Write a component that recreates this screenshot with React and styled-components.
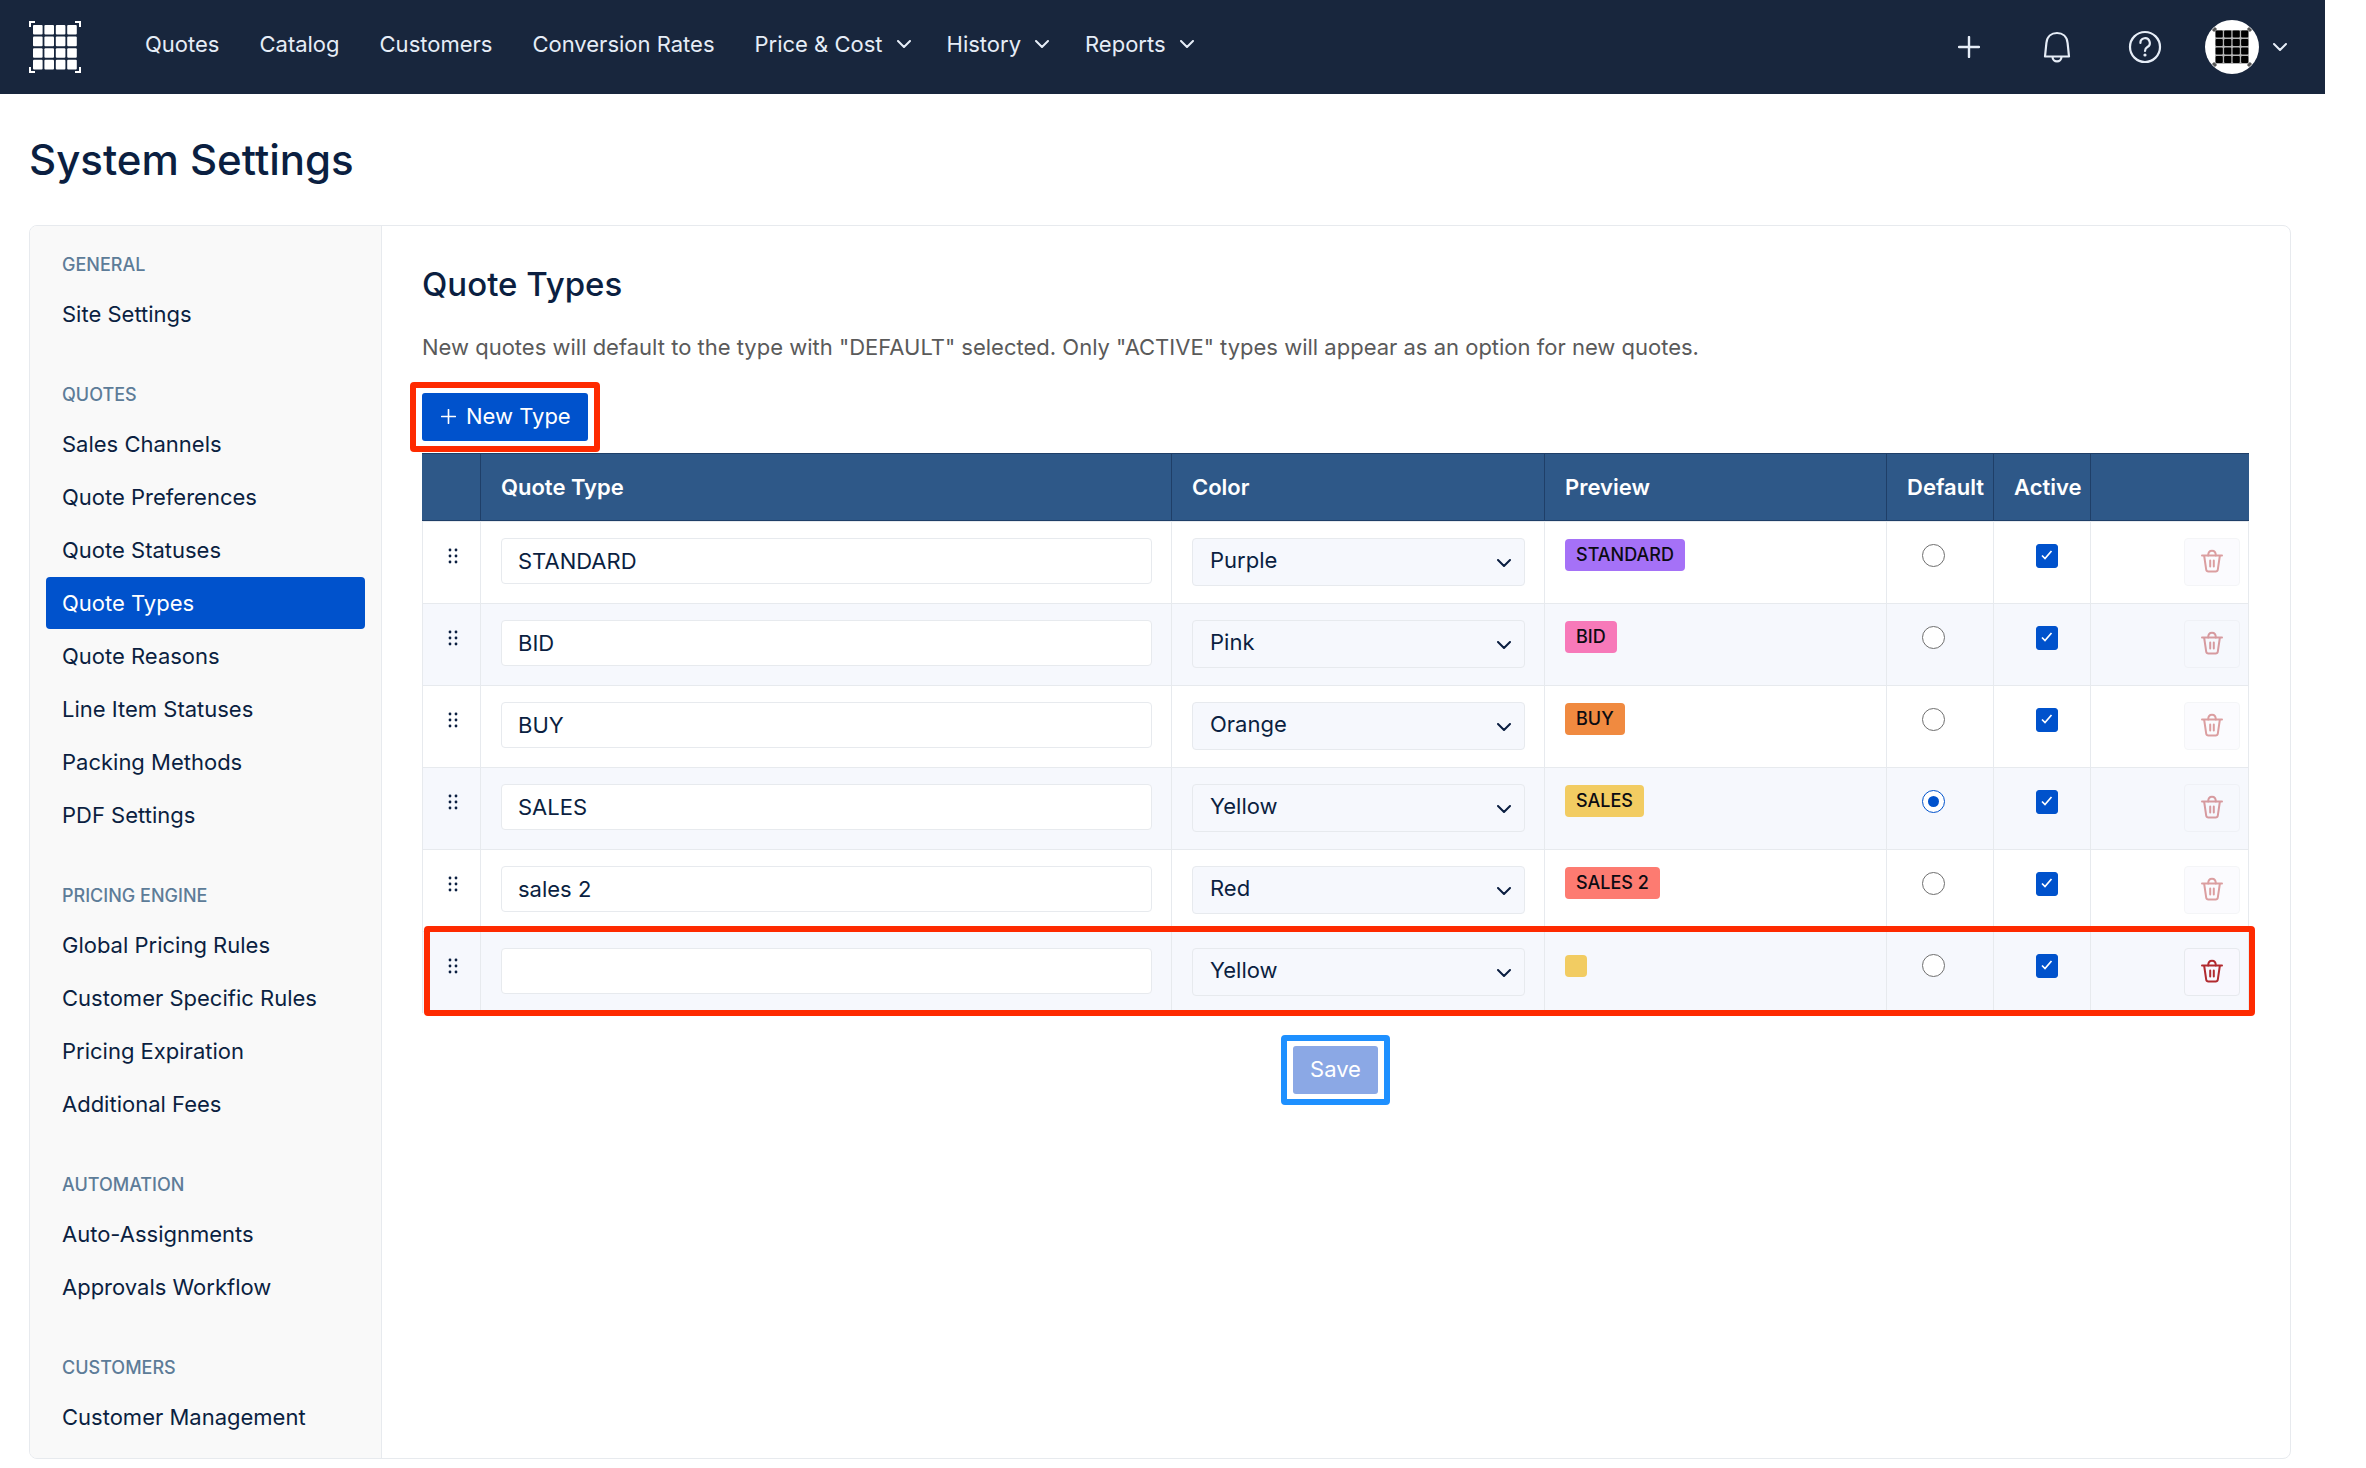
import React, { useState } from 'react';
import styled, { createGlobalStyle } from 'styled-components';

const menu = [
	{ label: 'Quotes' },
	{ label: 'Catalog' },
	{ label: 'Customers' },
	{ label: 'Conversion Rates' },
	{ label: 'Price & Cost', dropdown: true },
	{ label: 'History', dropdown: true },
	{ label: 'Reports', dropdown: true },
];

const sections = [
	{ title: 'GENERAL', items: ['Site Settings'] },
	{
		title: 'QUOTES',
		items: [
			'Sales Channels',
			'Quote Preferences',
			'Quote Statuses',
			'Quote Types',
			'Quote Reasons',
			'Line Item Statuses',
			'Packing Methods',
			'PDF Settings',
		],
	},
	{
		title: 'PRICING ENGINE',
		items: [
			'Global Pricing Rules',
			'Customer Specific Rules',
			'Pricing Expiration',
			'Additional Fees',
		],
	},
	{ title: 'AUTOMATION', items: ['Auto-Assignments', 'Approvals Workflow'] },
	{ title: 'CUSTOMERS', items: ['Customer Management'] },
];

const colors = {
	Purple: '#a571f7',
	Pink: '#f779b9',
	Orange: '#f08a40',
	Yellow: '#f2cc62',
	Red: '#fd7b71',
};

const initialTypes = [
	{ id: 1, name: 'STANDARD', color: 'Purple', active: true },
	{ id: 2, name: 'BID', color: 'Pink', active: true },
	{ id: 3, name: 'BUY', color: 'Orange', active: true },
	{ id: 4, name: 'SALES', color: 'Yellow', active: true },
	{ id: 5, name: 'sales 2', color: 'Red', active: true },
	{ id: 6, name: '', color: 'Yellow', active: true, isNew: true },
];

function Chevron() {
	return (
		<svg width="14" height="8" viewBox="0 0 14 8" fill="none" stroke="currentColor" strokeWidth="2" strokeLinecap="round" strokeLinejoin="round" aria-hidden="true">
			<path d="M1 1l6 6 6-6" />
		</svg>
	);
}

function GridMark() {
	const cells = [0, 1, 2, 3];
	return (
		<svg width="52" height="52" viewBox="0 0 52 52" fill="currentColor" aria-hidden="true">
			{cells.map((row) =>
				cells.map((col) => (
					<rect key={`${row}-${col}`} x={4 + col * 11.4} y={4 + row * 11.6} width="9.6" height="9.6" rx="1" />
				))
			)}
			<path d="M0 0h6v2H2v4H0zM52 0h-6v2h4v4h2zM0 52h6v-2H2v-4H0zM52 52h-6v-2h4v-4h2z" />
		</svg>
	);
}

function AvatarMark() {
	const cells = [0, 1, 2, 3];
	return (
		<svg width="54" height="54" viewBox="0 0 54 54" aria-hidden="true">
			<circle cx="27" cy="27" r="27" fill="#fff" />
			<rect x="10" y="10" width="34" height="34" fill="#b5b5b5" />
			{cells.map((row) =>
				cells.map((col) => (
					<rect key={`${row}-${col}`} x={10.6 + col * 8.5} y={10.4 + row * 8.5} width="7.2" height="7.2" rx="1" fill="#000" />
				))
			)}
			<path d="M8 11l3-3M43 8l3 3M8 43l3 3M46 43l-3 3" stroke="#555" strokeWidth="3" />
		</svg>
	);
}

function PlusIcon({ size }) {
	return (
		<svg width={size} height={size} viewBox="0 0 22 22" fill="none" stroke="currentColor" strokeWidth="2.400" strokeLinecap="round" aria-hidden="true">
			<path d="M11 1v20M1 11h20" />
		</svg>
	);
}

function BellIcon() {
	return (
		<svg width="28" height="32" viewBox="0 0 28 32" fill="none" stroke="currentColor" strokeWidth="2.200" strokeLinejoin="round" aria-hidden="true">
			<path d="M14 2C8.500 2 4 5.500 3.400 12L2 25.500h24L24.600 12C24 5.500 19.500 2 14 2z" />
			<path d="M9.500 25.500c0 6.600 9 6.600 9 0" />
		</svg>
	);
}

function HelpIcon() {
	return (
		<svg width="34" height="34" viewBox="0 0 34 34" fill="none" stroke="currentColor" strokeWidth="2.200" strokeLinecap="round" strokeLinejoin="round" aria-hidden="true">
			<circle cx="17" cy="17" r="15" />
			<path d="M12.400 13a4.700 4.700 0 1 1 7 4c-1.700 1-2.400 1.800-2.400 4" />
			<circle cx="17" cy="25" r="1.600" fill="currentColor" stroke="none" />
		</svg>
	);
}

function TrashIcon() {
	return (
		<svg width="24" height="24" viewBox="0 0 24 24" fill="none" stroke="currentColor" strokeWidth="2" strokeLinecap="round" strokeLinejoin="round" aria-hidden="true">
			<path d="M2 6.500h20" />
			<path d="M8.200 6.500C8.200 .3 15.800 .3 15.800 6.500" />
			<path d="M4.200 7l2 13.700q.3 1.800 2.200 1.800h7.200q1.900 0 2.200-1.800L19.800 7" />
			<path d="M10.200 11.500v6M13.800 11.500v6" />
		</svg>
	);
}

function GripIcon() {
	return (
		<svg width="10" height="16" viewBox="0 0 10 16" fill="currentColor" aria-hidden="true">
			{[2, 8, 14].map((y) => (
				<React.Fragment key={y}>
					<circle cx="2" cy={y} r="1.400" />
					<circle cx="8" cy={y} r="1.400" />
				</React.Fragment>
			))}
		</svg>
	);
}

export default function App() {
	const [types, setTypes] = useState(initialTypes);
	const [defaultId, setDefaultId] = useState(4);

	const update = (id, patch) => {
		setTypes(types.map((type) => (type.id === id ? { ...type, ...patch } : type)));
	};

	const addType = () => {
		setTypes([...types, { id: Date.now(), name: '', color: 'Yellow', active: true, isNew: true }]);
	};

	const removeType = (id) => {
		setTypes(types.filter((type) => type.id !== id));
	};

	return (
		<Page>
			<GlobalStyle />
			<Header>
				<Logo href="#" aria-label="Home">
					<GridMark />
				</Logo>
				<Nav>
					{menu.map((item) =>
						item.dropdown ? (
							<NavMenu key={item.label} type="button">
								{item.label}
								<Chevron />
							</NavMenu>
						) : (
							<NavLink key={item.label} href="#">
								{item.label}
							</NavLink>
						)
					)}
				</Nav>
				<Tools>
					<IconButton type="button" aria-label="Add">
						<PlusIcon size={22} />
					</IconButton>
					<IconButton type="button" aria-label="Notifications">
						<BellIcon />
					</IconButton>
					<IconButton type="button" aria-label="Help">
						<HelpIcon />
					</IconButton>
					<Account type="button" aria-label="Account">
						<AvatarMark />
						<Chevron />
					</Account>
				</Tools>
			</Header>

			<Title>System Settings</Title>

			<Panel>
				<Sidebar>
					{sections.map((section) => (
						<Section key={section.title}>
							<SectionTitle>{section.title}</SectionTitle>
							{section.items.map((item) => (
								<SideLink key={item} href="#" $active={item === 'Quote Types'}>
									{item}
								</SideLink>
							))}
						</Section>
					))}
				</Sidebar>

				<Content>
					<Heading>Quote Types</Heading>
					<Description>
						New quotes will default to the type with "DEFAULT" selected. Only "ACTIVE" types will appear as an option for new quotes.
					</Description>

					<Callout>
						<PrimaryButton type="button" onClick={addType}>
							<PlusIcon size={15} />
							New Type
						</PrimaryButton>
						<Frame $color="#fe2a00" />
					</Callout>

					<TableArea>
						<Table>
							<colgroup>
								<Col $width={59} />
								<col />
								<Col $width={373} />
								<Col $width={342} />
								<Col $width={107} />
								<Col $width={97} />
								<Col $width={158} />
							</colgroup>
							<thead>
								<tr>
									<Th aria-label="Order" />
									<Th>Quote Type</Th>
									<Th>Color</Th>
									<Th>Preview</Th>
									<Th>Default</Th>
									<Th>Active</Th>
									<Th aria-label="Delete" />
								</tr>
							</thead>
							<tbody>
								{types.map((type) => (
									<Row key={type.id}>
										<GripCell>
											<GripIcon />
										</GripCell>
										<Td>
											<TextInput
												aria-label="Quote type name"
												value={type.name}
												onChange={(e) => update(type.id, { name: e.target.value })}
											/>
										</Td>
										<Td>
											<SelectBox>
												<Select
													aria-label="Color"
													value={type.color}
													onChange={(e) => update(type.id, { color: e.target.value })}
												>
													{Object.keys(colors).map((name) => (
														<option key={name}>{name}</option>
													))}
												</Select>
												<Chevron />
											</SelectBox>
										</Td>
										<Td>
											<Tag $color={colors[type.color]}>{type.name}</Tag>
										</Td>
										<DefaultCell>
											<Radio
												type="radio"
												name="default"
												aria-label="Default"
												checked={defaultId === type.id}
												onChange={() => setDefaultId(type.id)}
											/>
										</DefaultCell>
										<ActiveCell>
											<CheckWrap>
												<Checkbox
													type="checkbox"
													aria-label="Active"
													checked={type.active}
													onChange={(e) => update(type.id, { active: e.target.checked })}
												/>
												<svg width="12" height="10" viewBox="0 0 12 10" fill="none" stroke="#fff" strokeWidth="1.700" aria-hidden="true">
													<path d="M1 5.500l3 3L10.500 1" />
												</svg>
											</CheckWrap>
										</ActiveCell>
										<DeleteCell>
											<DeleteButton
												type="button"
												aria-label="Delete"
												disabled={!type.isNew}
												onClick={() => removeType(type.id)}
											>
												<TrashIcon />
											</DeleteButton>
										</DeleteCell>
									</Row>
								))}
							</tbody>
						</Table>
						<RowFrame />
					</TableArea>

					<Footer>
						<Callout>
							<PrimaryButton type="button" disabled>
								Save
							</PrimaryButton>
							<Frame $color="#1e90ff" />
						</Callout>
					</Footer>
				</Content>
			</Panel>
		</Page>
	);
}

const GlobalStyle = createGlobalStyle`
	* {
		box-sizing: border-box;
	}

	body {
		margin: 0;
		background: #fff;
		color: #0b1f41;
		font-family: Inter, 'Liberation Sans', sans-serif;
		font-size: 22px;
		line-height: 32px;
	}

	button, input, select {
		font: inherit;
		color: inherit;
	}
`;

const Page = styled.div`
	padding-right: 41px;
`;

const Header = styled.header`
	display: flex;
	align-items: center;
	height: 94px;
	padding: 0 38px 0 29px;
	background: #18263d;
	color: #e6edf7;
`;

const Logo = styled.a`
	display: flex;
	margin-right: 64px;
	color: #fff;
`;

const Nav = styled.nav`
	display: flex;
	flex: 1;
	padding-bottom: 6px;
`;

const NavLink = styled.a`
	margin-right: 40px;
	color: inherit;
	text-decoration: none;
	white-space: nowrap;
`;

const NavMenu = styled.button`
	display: flex;
	align-items: center;
	gap: 14px;
	margin-right: 36px;
	padding: 0;
	border: 0;
	background: none;
	white-space: nowrap;
`;

const Tools = styled.div`
	display: flex;
	align-items: center;
`;

const IconButton = styled.button`
	display: flex;
	align-items: center;
	justify-content: center;
	width: 48px;
	height: 48px;
	margin-left: 40px;
	padding: 0;
	border: 0;
	background: none;
`;

const Account = styled.button`
	display: flex;
	align-items: center;
	gap: 14px;
	margin-left: 36px;
	padding: 0;
	border: 0;
	background: none;
`;

const Title = styled.h1`
	margin: 39px 0 38px 29px;
	font-size: 42px;
	font-weight: 500;
	line-height: 54px;
`;

const Panel = styled.div`
	display: flex;
	margin: 0 34px 8px 29px;
	border: 1px solid #e7eaee;
	border-radius: 8px;
	overflow: hidden;
`;

const Sidebar = styled.aside`
	flex: none;
	width: 352px;
	padding: 21px 16px 15px;
	border-right: 1px solid #e7eaee;
	background: #f9f9f9;
`;

const Section = styled.div`
	display: flex;
	flex-direction: column;
	gap: 1px;
	margin-bottom: 37px;

	&:last-child {
		margin-bottom: 0;
	}
`;

const SectionTitle = styled.div`
	height: 40px;
	padding: 4px 16px 0;
	color: #5d7c98;
	font-size: 18px;
	font-weight: 500;
	line-height: 28px;
`;

const SideLink = styled.a`
	height: 52px;
	padding: 10px 16px;
	border-radius: 4px;
	background: ${(props) => (props.$active ? '#0052cc' : 'transparent')};
	color: ${(props) => (props.$active ? '#fff' : '#0b1f41')};
	text-decoration: none;
	white-space: nowrap;
`;

const Content = styled.main`
	flex: 1;
	min-width: 0;
	padding: 36px 41px 0 40px;
`;

const Heading = styled.h2`
	margin: 0;
	font-size: 33px;
	font-weight: 500;
	line-height: 44px;
`;

const Description = styled.p`
	margin: 25px 0 30px;
	color: #5a5a5a;
`;

const Callout = styled.div`
	position: relative;
	display: table;
`;

const Frame = styled.span`
	position: absolute;
	inset: -11px -12px;
	border: 6px solid ${(props) => props.$color};
	border-radius: 4px;
	pointer-events: none;
`;

const RowFrame = styled(Frame)`
	inset: auto -6px -3px 2px;
	height: 90px;
	border-color: #fe2a00;
`;

const PrimaryButton = styled.button`
	display: flex;
	align-items: center;
	gap: 10px;
	height: 48px;
	padding: 0 17px 2px;
	border: 0;
	border-radius: 3px;
	background: ${(props) => (props.disabled ? '#8ba8e5' : '#0052cc')};
	color: #fff;

	svg {
		margin-left: 2px;
	}
`;

const TableArea = styled.div`
	position: relative;
	margin-top: 12px;
`;

const Table = styled.table`
	width: 100%;
	table-layout: fixed;
	border-collapse: separate;
	border-spacing: 0;
`;

const Col = styled.col`
	width: ${(props) => props.$width}px;
`;

const Th = styled.th`
	height: 68px;
	padding: 0 0 0 20px;
	border: solid #1f3f68;
	border-width: 1px 1px 1px 0;
	background: #2e5888;
	color: #fff;
	font-weight: 600;
	text-align: left;

	&:last-child {
		border-right: 0;
	}
`;

const Td = styled.td`
	height: 82px;
	padding: 16px 19px 0 20px;
	border: solid #e7eaee;
	border-width: 1px 1px 0 0;
	vertical-align: top;
	line-height: 0;

	&:first-child {
		border-left-width: 1px;
	}
`;

const Row = styled.tr`
	&:nth-child(even) {
		background: #f6f8fd;
	}
`;

const GripCell = styled(Td)`
	padding: 26px 0 0 25px;
`;

const DefaultCell = styled(Td)`
	padding: 22px 0 0 35px;
`;

const ActiveCell = styled(Td)`
	padding: 22px 0 0 42px;
`;

const DeleteCell = styled(Td)`
	padding: 16px 8px 0 0;
`;

const TextInput = styled.input`
	width: 100%;
	height: 46px;
	padding: 0 16px 1px;
	border: 1px solid #e7eaee;
	border-radius: 4px;
	background: #fff;
`;

const SelectBox = styled.div`
	position: relative;

	svg {
		position: absolute;
		top: 21px;
		right: 14px;
		pointer-events: none;
	}
`;

const Select = styled.select`
	appearance: none;
	width: 100%;
	height: 48px;
	padding: 0 40px 4px 17px;
	border: 1px solid #e7eaee;
	border-radius: 4px;
	background: #f6f8fd;
	line-height: 32px;
`;

const Tag = styled.span`
	display: inline-block;
	margin-top: 1px;
	padding: 0 11px;
	border-radius: 4px;
	background: ${(props) => props.$color};
	color: #0b0b12;
	font-size: 18px;
	font-weight: 500;
	line-height: 32px;
	text-transform: uppercase;

	&:empty {
		height: 22px;
		margin-top: 7px;
	}
`;

const Radio = styled.input`
	appearance: none;
	display: grid;
	place-content: center;
	width: 23px;
	height: 23px;
	margin: 0;
	border: 1px solid #6f6f6f;
	border-radius: 50%;
	background: #fff;

	&:checked {
		border-color: #0052cc;
	}

	&:checked::before {
		content: '';
		width: 11px;
		height: 11px;
		border-radius: 50%;
		background: #0052cc;
	}
`;

const CheckWrap = styled.div`
	position: relative;
	width: 22px;

	svg {
		position: absolute;
		top: 6px;
		left: 5px;
		pointer-events: none;
	}
`;

const Checkbox = styled.input`
	appearance: none;
	width: 22px;
	height: 24px;
	margin: 0;
	border: 1px solid #0052cc;
	border-radius: 3px;
	background: #fff;

	&:checked {
		background: #0052cc;
	}
`;

const DeleteButton = styled.button`
	display: flex;
	align-items: center;
	justify-content: center;
	width: 56px;
	height: 48px;
	margin-left: auto;
	padding: 0 0 2px;
	border: 1px solid #e7eaee;
	border-radius: 4px;
	background: #f8f8fe;
	color: #b12a2f;
	opacity: ${(props) => (props.disabled ? 0.45 : 1)};
`;

const Footer = styled.div`
	display: flex;
	justify-content: center;
	padding-top: 33px;
`;
